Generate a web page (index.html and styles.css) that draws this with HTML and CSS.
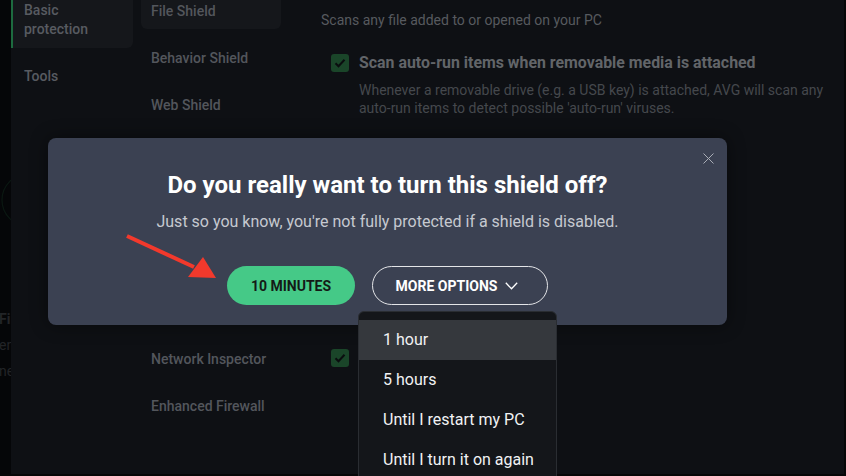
FILE: index.html
```html
<!DOCTYPE html>
<html>
<head>
<meta charset="utf-8">
<link rel="stylesheet" href="styles.css">
</head>
<body>
<div class="app">
  <div class="edge">
    <svg class="edge-ring" width="11" height="60" viewBox="0 0 11 60"><circle cx="28" cy="30" r="26" fill="none" stroke="#0b1812" stroke-width="1.2"/></svg>
    <div class="edge-txt edge-b">Fi</div>
    <div class="edge-txt">en</div>
    <div class="edge-txt">ne</div>
  </div>
  <nav class="nav1">
    <div class="nav1-item active">Basic<br>protection</div>
    <div class="nav1-item">Tools</div>
  </nav>
  <nav class="nav2">
    <div class="nav2-item active">File Shield</div>
    <div class="nav2-item">Behavior Shield</div>
    <div class="nav2-item">Web Shield</div>
    <div class="nav2-item sep">Network Inspector</div>
    <div class="nav2-item">Enhanced Firewall</div>
  </nav>
  <main class="content">
    <p class="lead">Scans any file added to or opened on your PC</p>
    <div class="opt">
      <span class="check"><svg width="12" height="10" viewBox="0 0 12 10"><path d="M1.5 5.2 L4.5 8.2 L10.5 1.8" fill="none" stroke="#0a0d0f" stroke-width="2"/></svg></span>
      <div class="opt-text">
        <div class="opt-title">Scan auto-run items when removable media is attached</div>
        <div class="opt-desc">Whenever a removable drive (e.g. a USB key) is attached, AVG will scan any auto-run items to detect possible 'auto-run' viruses.</div>
      </div>
    </div>
    <div class="opt opt-net">
      <span class="check"><svg width="12" height="10" viewBox="0 0 12 10"><path d="M1.5 5.2 L4.5 8.2 L10.5 1.8" fill="none" stroke="#0a0d0f" stroke-width="2"/></svg></span>
    </div>
  </main>
</div>

<div class="dialog">
  <svg class="close" width="11" height="11" viewBox="0 0 11 11"><path d="M0.5 0.5 L10.5 10.5 M10.5 0.5 L0.5 10.5" stroke="#a9adb6" stroke-width="1"/></svg>
  <h1 class="dlg-title">Do you really want to turn this shield off?</h1>
  <p class="dlg-sub">Just so you know, you're not fully protected if a shield is disabled.</p>
  <div class="dlg-btns">
    <button class="btn btn-green">10 MINUTES</button>
    <button class="btn btn-outline">MORE OPTIONS <svg width="13" height="8" viewBox="0 0 13 8"><path d="M0.8 0.8 L6.5 6.8 L12.2 0.8" fill="none" stroke="#ffffff" stroke-width="1.3"/></svg></button>
  </div>
</div>

<ul class="menu">
  <li class="menu-item hl">1 hour</li>
  <li class="menu-item">5 hours</li>
  <li class="menu-item">Until I restart my PC</li>
  <li class="menu-item">Until I turn it on again</li>
</ul>

<svg class="arrow" width="110" height="60" viewBox="0 0 110 60">
  <line x1="7" y1="6" x2="74" y2="37" stroke="#f2392c" stroke-width="4" stroke-linecap="butt"/>
  <polygon points="96,48 68,47 83,27" fill="#f2392c"/>
</svg>
</body>
</html>
```

FILE: styles.css
```css
* { box-sizing: border-box; }
html, body {
  margin: 0;
  padding: 0;
  width: 846px;
  height: 476px;
  overflow: hidden;
  background: #0e1014;
  font-family: Roboto, "Liberation Sans", sans-serif;
}
.app {
  display: flex;
  height: 476px;
  width: 846px;
  border-right: 2px solid #060708;
  border-bottom: 2px solid #060708;
}
.edge {
  width: 11px;
  flex: none;
  background: #050608;
  overflow: hidden;
  padding-top: 170px;
}
.edge-ring { display: block; }
.edge-txt {
  font-size: 14px;
  line-height: 26px;
  color: #222427;
  margin-left: -1px;
}
.edge-b { margin-top: 76px; font-weight: 700; }

.nav1 {
  width: 130px;
  flex: none;
}
.nav1-item {
  width: 122px;
  font-size: 14px;
  font-weight: 500;
  line-height: 19px;
  color: #585b61;
  padding: 0 0 0 13px;
  margin-top: 19px;
}
.nav1-item.active {
  margin-top: 0;
  padding: 1px 0 9px 11px;
  border-left: 2px solid #1d6b3f;
  background: #15171b;
  border-radius: 0 0 6px 0;
}

.nav2 {
  width: 180px;
  flex: none;
}
.nav2-item {
  width: 140px;
  height: 29px;
  padding: 1px 0 0 10px;
  font-size: 14px;
  font-weight: 500;
  line-height: 20px;
  color: #53565c;
  margin-top: 18px;
}
.nav2-item.active {
  margin-top: 0;
  background: #15171b;
  border-radius: 0 0 6px 6px;
}
.nav2-item.sep { margin-top: 225px; }

.content {
  flex: 1;
  min-width: 0;
}
.lead {
  margin: 10px 0 0;
  font-size: 14px;
  line-height: 20px;
  color: #575a5f;
}
.opt {
  display: flex;
  gap: 10px;
  padding-left: 10px;
  margin-top: 23px;
}
.check {
  flex: none;
  width: 18px;
  height: 18px;
  margin-top: 1px;
  border-radius: 3px;
  background: #1a4529;
  display: flex;
  align-items: center;
  justify-content: center;
}
.opt-title {
  font-size: 15.9px;
  font-weight: 700;
  line-height: 20px;
  color: #626569;
}
.opt-desc {
  margin-top: 8px;
  font-size: 14px;
  line-height: 18px;
  color: #45484d;
  padding-right: 14px;
}
.opt-net { margin-top: 231px; }

.dialog {
  position: absolute;
  left: 48px;
  top: 138px;
  width: 679px;
  height: 187px;
  background: #3b4152;
  border-radius: 8px;
  padding-top: 32px;
  text-align: center;
  box-shadow: 0 0 18px rgba(0, 0, 0, 0.45);
}
.close {
  position: absolute;
  left: 655px;
  top: 15px;
}
.dlg-title {
  margin: 0;
  font-size: 24px;
  line-height: 30px;
  font-weight: 700;
  color: #ffffff;
}
.dlg-sub {
  margin: 12px 0 0;
  font-size: 16px;
  line-height: 20px;
  color: #c6c9d0;
}
.dlg-btns {
  margin-top: 34px;
  display: flex;
  justify-content: center;
  gap: 17px;
}
.btn {
  height: 39px;
  border-radius: 20px;
  font-family: Roboto, "Liberation Sans", sans-serif;
  font-size: 14px;
  font-weight: 700;
  padding: 0;
  display: flex;
  align-items: center;
  justify-content: center;
}
.btn-green {
  width: 128px;
  background: #45c987;
  border: none;
  color: #141a16;
}
.btn-outline {
  width: 176px;
  background: transparent;
  border: 1px solid #e4e5e8;
  color: #ffffff;
  gap: 8px;
  padding-right: 6px;
}

.menu {
  position: absolute;
  left: 358px;
  top: 311px;
  width: 199px;
  height: 180px;
  margin: 0;
  padding: 8px 0 0;
  list-style: none;
  background: #14161a;
  border: 1px solid #2a2d32;
  border-radius: 6px 6px 0 0;
}
.menu-item {
  height: 40px;
  line-height: 40px;
  padding-left: 24px;
  font-size: 16px;
  color: #f1f2f4;
}
.menu-item.hl { background: #35383d; }

.arrow {
  position: absolute;
  left: 120px;
  top: 230px;
}
```
